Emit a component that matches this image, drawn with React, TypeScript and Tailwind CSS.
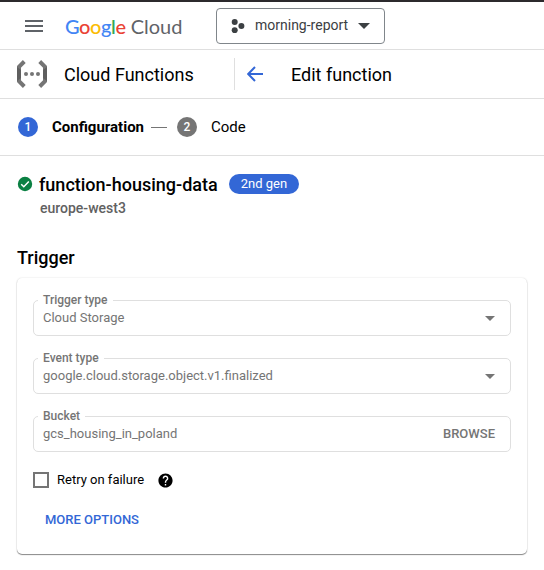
import type { ReactNode } from 'react';

function Caret({ className }: { className: string }) {
  return (
    <svg viewBox="0 0 12 6" className={className} fill="currentColor">
      <path d="M0 0h12L6 6z" />
    </svg>
  );
}

function Field({ label, value, children }: { label: string; value: string; children: ReactNode }) {
  return (
    <div className="relative flex h-9 items-center justify-between rounded-[5px] border border-[#dfdfdf] pr-[15px] pl-[9px] text-[#757575]">
      <span className="absolute -top-[8px] left-[4px] bg-white px-[5px] text-[12px] leading-[14px] font-medium">
        {label}
      </span>
      <span className="text-[13px] leading-4">{value}</span>
      {children}
    </div>
  );
}

function Step({ n, color }: { n: number; color: string }) {
  return (
    <span className={`flex size-5 items-center justify-center rounded-full text-[12px] font-medium text-white ${color}`}>
      {n}
    </span>
  );
}

export default function App() {
  return (
    <div className="h-[570px] w-[544px] overflow-hidden bg-white font-['Roboto',sans-serif] text-black">
      <header className="flex h-[50px] items-center border-t-2 border-b border-t-[#2c2a2d] border-b-[#dfdfdf] pl-[25px]">
        <svg viewBox="0 0 18 12" className="h-3 w-[18px]" fill="#5f6368">
          <path d="M0 0h18v2H0zM0 5h18v2H0zM0 10h18v2H0z" />
        </svg>
        <div className="ml-[22px] flex w-[151px] items-center font-['Lato',sans-serif] text-[20px] leading-6">
          <span className="font-medium tracking-[-0.4px]">
            <span className="text-[#4285f4]">G</span>
            <span className="text-[#ea4335]">o</span>
            <span className="text-[#fbbc04]">o</span>
            <span className="text-[#4285f4]">g</span>
            <span className="text-[#34a853]">l</span>
            <span className="text-[#ea4335]">e</span>
          </span>
          <span className="ml-[5px] text-[#5f6368]">Cloud</span>
        </div>
        <button className="flex h-9 w-[169px] items-center rounded-[4px] border border-[#80868b] pl-[14px] text-[#3c4043]">
          <svg viewBox="0 0 14 14" className="size-[14px]" fill="currentColor">
            <circle cx="3.7" cy="3" r="3" />
            <circle cx="10.4" cy="7" r="3" />
            <circle cx="3.7" cy="11.2" r="3" />
          </svg>
          <span className="ml-[10px] text-[14px]">morning-report</span>
          <Caret className="ml-[10px] h-[6px] w-3" />
        </button>
      </header>

      <div className="flex h-[49px] items-center border-b border-[#dfdfdf] pl-[17px]">
        <svg viewBox="0 0 30 28" className="h-7 w-[30px]" fill="none">
          <path d="M7.3 1.5L2 6.8v14.4l5.3 5.3M22.7 1.5L28 6.8v14.4l-5.3 5.3" stroke="#757575" strokeWidth="4" />
          <path d="M0 7l4 3v8l-4 3zM30 7l-4 3v8l4 3z" fill="#5f5f5f" />
          <g fill="#757575">
            <circle cx="9" cy="14" r="2" />
            <circle cx="15" cy="14" r="2" />
            <circle cx="21" cy="14" r="2" />
          </g>
        </svg>
        <span className="ml-[17px] w-[170px] text-[18px]">Cloud Functions</span>
        <span className="h-8 w-px bg-[#dfdfdf]" />
        <svg viewBox="0 0 16 16" className="ml-3 size-4" fill="none" stroke="#3367d6" strokeWidth="2">
          <path d="M16 8H1.5M8 1L1.2 8 8 15" />
        </svg>
        <span className="ml-7 text-[18px]">Edit function</span>
      </div>

      <div className="flex h-[57px] items-center border-b border-[#dfdfdf] pl-[18px] text-[15px]">
        <Step n={1} color="bg-[#3367d6]" />
        <span className="ml-[14px] w-[99px] font-bold">Configuration</span>
        <span className="h-px w-4 bg-[#757575]" />
        <span className="w-[10px]" />
        <Step n={2} color="bg-[#757575]" />
        <span className="ml-[14px]">Code</span>
      </div>

      <main className="pt-[17px] pr-[17px] pl-[17px]">
        <div className="flex h-[22px] items-center">
          <svg viewBox="0 0 16 16" className="size-4">
            <circle cx="8" cy="8" r="7.2" fill="#0b8043" />
            <path d="M4.2 8.2l2.6 2.6 5-5.2" stroke="#fff" strokeWidth="1.5" fill="none" />
          </svg>
          <h1 className="ml-[6px] w-[190px] text-[18px] font-medium">function-housing-data</h1>
          <span className="flex h-5 w-[70px] items-center justify-center rounded-full bg-[#3367d6] text-[13px] text-white">
            2nd gen
          </span>
        </div>
        <p className="mt-[3px] ml-[23px] text-[14px] leading-5 font-medium text-[#616161]">europe-west3</p>
        <h2 className="mt-[28px] text-[18px] leading-6 font-medium">Trigger</h2>

        <section className="mt-2 flex h-[276px] flex-col gap-[22px] rounded-[5px] px-4 pt-[22px] shadow-[0_1px_1px_rgba(0,0,0,0.45),0_0_2px_rgba(0,0,0,0.14)]">
          <Field label="Trigger type" value="Cloud Storage">
            <Caret className="h-[5px] w-[10px]" />
          </Field>
          <Field label="Event type" value="google.cloud.storage.object.v1.finalized">
            <Caret className="h-[5px] w-[10px]" />
          </Field>
          <Field label="Bucket" value="gcs_housing_in_poland">
            <span className="text-[13px] font-medium">BROWSE</span>
          </Field>
          <div className="-mt-[2px] flex h-4 items-center text-[13px]">
            <span className="size-4 border-2 border-[#757575]" />
            <span className="ml-2 w-[100px]">Retry on failure</span>
            <svg viewBox="0 0 24 24" className="size-[17px]">
              <path
                d="M12 2C6.48 2 2 6.48 2 12s4.48 10 10 10 10-4.48 10-10S17.52 2 12 2zm1 17h-2v-2h2v2zm2.07-7.75l-.9.92C13.45 12.9 13 13.5 13 15h-2v-.5c0-1.1.45-2.1 1.17-2.83l1.24-1.26c.37-.36.59-.86.59-1.41 0-1.1-.9-2-2-2s-2 .9-2 2H8c0-2.21 1.79-4 4-4s4 1.79 4 4c0 .88-.36 1.68-.93 2.25z"
                fill="#000"
              />
            </svg>
          </div>
          <button className="ml-3 self-start text-[13px] leading-5 font-medium text-[#3367d6]">MORE OPTIONS</button>
        </section>
      </main>
    </div>
  );
}
